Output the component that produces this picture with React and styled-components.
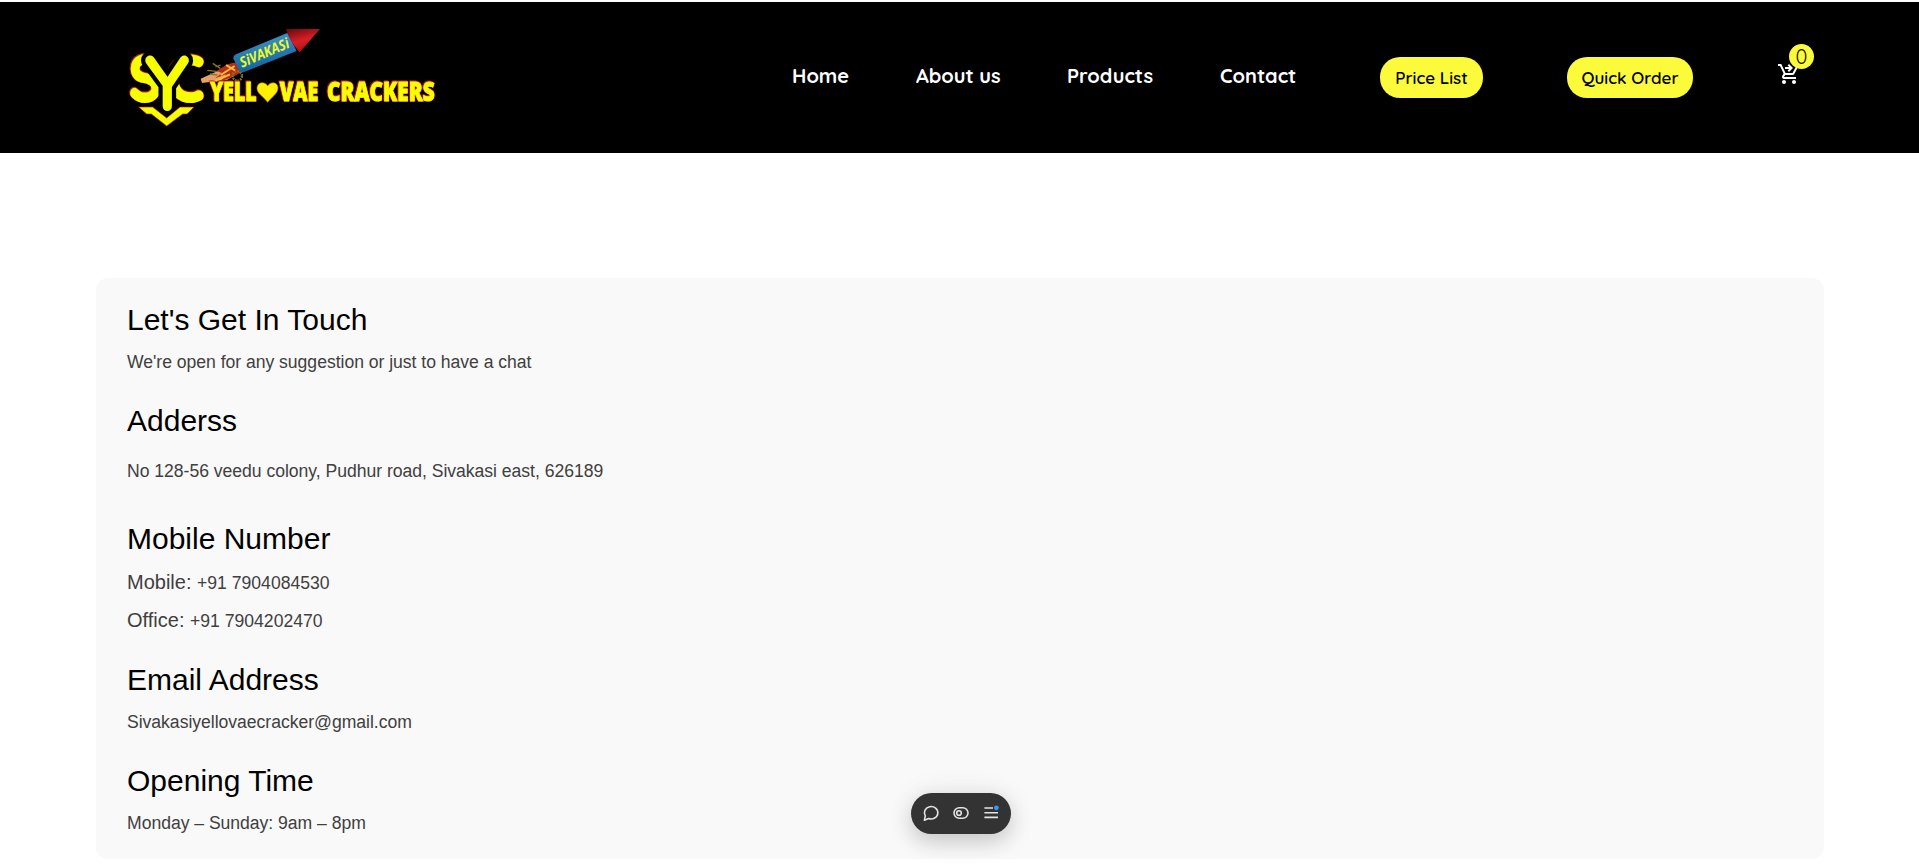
import React from "react";
import styled, { createGlobalStyle } from "styled-components";
import { MdOutlineShoppingCartCheckout } from "react-icons/md";

const GlobalStyle = createGlobalStyle`
  * { box-sizing: border-box; }
  body {
    margin: 0;
    background: #fff;
    font-family: "Liberation Sans", Arial, sans-serif;
    overflow: hidden;
  }
`;

const Page = styled.div`
  position: relative;
  height: 866px;
  padding-top: 2px;
`;

const Header = styled.header`
  display: flex;
  align-items: flex-start;
  height: 151px;
  padding: 13px 0 0 120px;
  background: #000;
`;

const LogoArt = styled.svg`
  flex: none;
  display: block;
  width: 330px;
  height: 120px;
`;

const Monogram = styled.text`
  font-family: Quicksand, "Open Sans", sans-serif;
  font-weight: 700;
  fill: #f5ff00;
  stroke: #f5ff00;
  stroke-width: ${(p) => p.$bold || 9}px;
`;

const MonogramGap = styled(Monogram)`
  stroke: #000;
  stroke-width: 26px;
  paint-order: stroke;
`;

const Word = styled.text`
  font: 800 81px "Open Sans", sans-serif;
  fill: #f5ff00;
  stroke: #f5ff00;
  stroke-width: 2.5px;
`;

const Outlined = styled.g`
  filter: drop-shadow(-1.5px -1.5px 0 #c8221a) drop-shadow(1px 0.5px 0 #c8221a);
`;

const Nav = styled.nav`
  display: flex;
  gap: 66px;
  margin: 48px 0 0 342px;
`;

const NavLink = styled.a`
  width: ${(p) => p.$width}px;
  color: #fff;
  font: 700 20px/26px Quicksand, Lato, sans-serif;
  white-space: nowrap;
`;

const Actions = styled.div`
  display: flex;
  gap: 84px;
  margin: 42px 0 0 82px;
`;

const Pill = styled.button`
  width: ${(p) => p.$width}px;
  height: 41px;
  padding: 1px 0 0;
  border: 0;
  border-radius: 20px;
  background: #fbfb3c;
  color: #000;
  font: 600 17px/24px Quicksand, Lato, sans-serif;
  white-space: nowrap;
`;

const Cart = styled.div`
  position: relative;
  width: 24px;
  height: 24px;
  margin: 47px 0 0 84px;
  color: #fff;
  svg { display: block; }
`;

const Badge = styled.span`
  position: absolute;
  left: 12px;
  top: -18px;
  width: 25px;
  height: 25px;
  border-radius: 50%;
  background: #fbfb3c;
  color: #111;
  font: 400 20px/25px Quicksand, Lato, sans-serif;
  text-align: center;
`;

const Card = styled.main`
  margin: 125px 95px 0 96px;
  padding: 24px 31px 22px;
  border-radius: 12px;
  background: #f9f9f9;
`;

const Section = styled.section`
  margin-top: ${(p) => p.$gap || 0}px;
`;

const Heading = styled.h2`
  margin: 0;
  color: #000;
  font-size: 30px;
  font-weight: 400;
  line-height: 36px;
`;

const Text = styled.p`
  margin: ${(p) => p.$top || 11}px 0 0;
  color: #404040;
  font-size: 17.6px;
  line-height: 27px;
  letter-spacing: -0.03px;
`;

const Phone = styled.p`
  margin: ${(p) => p.$top || 10}px 0 0;
  color: #404040;
  font-size: 20px;
  line-height: 30px;
  span { font-size: 17.6px; line-height: 1; }
`;

const Toolbar = styled.div`
  position: absolute;
  left: 911px;
  top: 793px;
  display: flex;
  align-items: center;
  justify-content: space-between;
  width: 100px;
  height: 41px;
  padding: 0 12px 1px;
  border-radius: 21px;
  background: #333;
  box-shadow: 0 8px 22px rgba(0, 0, 0, 0.18), 0 0 32px rgba(0, 0, 0, 0.06);
`;

const Glyph = styled.svg`
  display: block;
  width: 16px;
  height: 16px;
  overflow: visible;
  fill: none;
  stroke: #e4e4e4;
  stroke-width: 1.6;
`;

function Logo() {
  return (
    <LogoArt viewBox="0 0 990 360" role="img" aria-label="Sivakasi Yellovae Crackers">
      <defs>
        <linearGradient id="tube" x1=".35" y1="0" x2=".6" y2="1">
          <stop offset="0.1" stopColor="#3f8fc4" />
          <stop offset="0.9" stopColor="#0f669c" />
        </linearGradient>
        <linearGradient id="tip" x1=".1" y1="0" x2=".5" y2="1">
          <stop offset="0" stopColor="#6c0a0e" />
          <stop offset=".55" stopColor="#d81f26" />
          <stop offset="1" stopColor="#a01216" />
        </linearGradient>
      </defs>

      <Outlined>
        <Monogram x="28" y="259" fontSize="190" textLength="96" lengthAdjust="spacingAndGlyphs">S</Monogram>
        <Monogram x="140" y="259" fontSize="190" textLength="112" lengthAdjust="spacingAndGlyphs">C</Monogram>
      </Outlined>
      <MonogramGap x="72" y="289" fontSize="234" textLength="138" lengthAdjust="spacingAndGlyphs">Y</MonogramGap>
      <path d="M56 276H98L140 309L180 276H222L201 297H188L140 333L94 297H80Z" fill="#f5ff00" stroke="#b3201a" strokeWidth="2" />

      <path d="M242 191L300 165L341 143L362 170L322 194L246 204Z" fill="#e7a168" />
      <path d="M290 168L322 148L350 142L366 171L335 187L300 200L318 178L286 190L305 174Z" fill="#b92a18" />
      <path d="M302 180L344 153M286 198L330 178M318 150L345 166" stroke="#f4c23a" strokeWidth="6" />
      <path d="M278 145L301 160M262 166L290 169M286 156L302 150M270 177L292 180" stroke="#85772a" strokeWidth="4" />
      <circle cx="352" cy="183" r="14" fill="none" stroke="#85772a" strokeWidth="7" strokeDasharray="5 3" />

      <path d="M341 133Q337 123 348 118L502 54L530 108L370 172Q361 174 357 164Z" fill="url(#tube)" />
      <path d="M498 42H600L539 112Q512 84 498 42Z" fill="url(#tip)" />
      <text
        transform="translate(366 158) rotate(-23)"
        fontFamily='"Open Sans", sans-serif'
        fontWeight="700"
        fontStyle="italic"
        fontSize="43"
        fill="#eef924"
        textLength="158"
        lengthAdjust="spacingAndGlyphs"
      >SiVAKASi</text>

      <Outlined>
        <Word x="271" y="257" textLength="139" lengthAdjust="spacingAndGlyphs">YELL</Word>
        <Word x="479" y="257" textLength="116" lengthAdjust="spacingAndGlyphs">VAE</Word>
        <Word x="621" y="257" textLength="323" lengthAdjust="spacingAndGlyphs">CRACKERS</Word>
      </Outlined>
      <path d="M443 262C430 244 410 235 411 219C412 200 435 198 443 213C452 198 474 201 474 219C474 235 456 245 443 262Z" fill="#fff200" stroke="#c86b1a" strokeWidth="2" />
    </LogoArt>
  );
}

export default function App() {
  return (
    <>
      <GlobalStyle />
      <Page>
        <Header>
          <Logo />
          <Nav>
            <NavLink $width={58}>Home</NavLink>
            <NavLink $width={85}>About us</NavLink>
            <NavLink $width={87}>Products</NavLink>
            <NavLink $width={78}>Contact</NavLink>
          </Nav>
          <Actions>
            <Pill $width={103}>Price List</Pill>
            <Pill $width={126}>Quick Order</Pill>
          </Actions>
          <Cart>
            <MdOutlineShoppingCartCheckout size={24} />
            <Badge>0</Badge>
          </Cart>
        </Header>

        <Card>
          <Section>
            <Heading>Let's Get In Touch</Heading>
            <Text>We're open for any suggestion or just to have a chat</Text>
          </Section>
          <Section $gap={27}>
            <Heading>Adderss</Heading>
            <Text $top={19}>No 128-56 veedu colony, Pudhur road, Sivakasi east, 626189</Text>
          </Section>
          <Section $gap={36}>
            <Heading>Mobile Number</Heading>
            <Phone>Mobile: <span>+91 7904084530</span></Phone>
            <Phone $top={8}>Office: <span>+91 7904202470</span></Phone>
          </Section>
          <Section $gap={27}>
            <Heading>Email Address</Heading>
            <Text>Sivakasiyellovaecracker@gmail.com</Text>
          </Section>
          <Section $gap={27}>
            <Heading>Opening Time</Heading>
            <Text>Monday – Sunday: 9am – 8pm</Text>
          </Section>
        </Card>

        <Toolbar>
          <Glyph viewBox="0 0 16 16">
            <path d="M1.4 15.2L2.3 10.8A6.7 6.2 0 1 1 5.6 13.5Z" strokeLinejoin="round" />
          </Glyph>
          <Glyph viewBox="0 0 16 16">
            <rect x="1" y="2.7" width="14" height="10.6" rx="5.3" />
            <circle cx="6" cy="8" r="2.3" />
          </Glyph>
          <Glyph viewBox="0 0 16 16">
            <path d="M1.4 3H10M1.4 7.7H15M1.4 12.4H15" />
            <circle cx="13.4" cy="2.8" r="2.4" fill="#3b95f5" stroke="none" />
          </Glyph>
        </Toolbar>
      </Page>
    </>
  );
}
